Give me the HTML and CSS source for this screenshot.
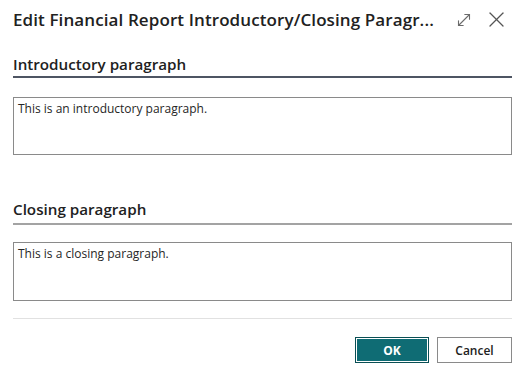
FILE: index.html
```html
<!DOCTYPE html>
<html lang="en">
<head>
<meta charset="utf-8">
<title>Edit Financial Report Introductory/Closing Paragraphs</title>
<link rel="stylesheet" href="styles.css">
</head>
<body>
<div class="dialog">
  <header class="dialog-header">
    <h1 class="dialog-title">Edit Financial Report Introductory/Closing Paragr...</h1>
    <div class="header-actions">
      <button class="icon-btn" aria-label="Expand">
        <svg width="14" height="14" viewBox="0 0 14 14" fill="none" stroke="#6b6b6b" stroke-width="1.1" stroke-linecap="round">
          <path d="M1.5 12.5 L12.5 1.5"/>
          <path d="M7.8 1.5 H12.5 V6.2"/>
          <path d="M1.5 7.8 V12.5 H6.2"/>
        </svg>
      </button>
      <button class="icon-btn" aria-label="Close">
        <svg width="15" height="15" viewBox="0 0 15 15" fill="none" stroke="#555" stroke-width="1.3" stroke-linecap="round">
          <path d="M1 1 L14 14"/>
          <path d="M14 1 L1 14"/>
        </svg>
      </button>
    </div>
  </header>

  <section class="group group-first">
    <h2 class="group-title">Introductory paragraph</h2>
    <div class="textbox">This is an introductory paragraph.</div>
  </section>

  <section class="group group-second">
    <h2 class="group-title">Closing paragraph</h2>
    <div class="textbox">This is a closing paragraph.</div>
  </section>

  <footer class="dialog-footer">
    <button class="btn btn-primary">OK</button>
    <button class="btn btn-secondary">Cancel</button>
  </footer>
</div>
</body>
</html>
```

FILE: styles.css
```css
* { box-sizing: border-box; }
html, body {
  margin: 0;
  padding: 0;
  background: #ffffff;
}
body {
  font-family: "Open Sans", "Noto Sans", sans-serif;
  color: #212121;
}
.dialog {
  width: 524px;
  height: 375px;
  padding: 0 12px 0 13px;
  display: flex;
  flex-direction: column;
}
.dialog-header {
  display: flex;
  align-items: center;
  justify-content: space-between;
  height: 38px;
  padding-top: 1px;
}
.dialog-title {
  margin: 0;
  font-size: 17px;
  font-weight: 600;
  color: #212121;
  white-space: nowrap;
  letter-spacing: 0.1px;
}
.header-actions {
  display: flex;
  align-items: center;
  gap: 18px;
  margin-right: 8px;
}
.icon-btn {
  background: none;
  border: none;
  padding: 0;
  display: flex;
  cursor: pointer;
}
.group {
  display: flex;
  flex-direction: column;
}
.group-title {
  margin: 16px 0 0 0;
  font-size: 15.2px;
  font-weight: 600;
  color: #212121;
  padding-bottom: 2px;
  border-bottom: 2px solid #4e5563;
  line-height: 20px;
}
.textbox {
  margin-top: 19px;
  height: 58px;
  border: 1px solid #8a8a8a;
  padding: 3px 4px;
  font-size: 12px;
  line-height: 16px;
  color: #262626;
}
.group-second .group-title {
  margin-top: 44px;
  padding-bottom: 4px;
  border-bottom-color: #a3a3a3;
}
.group-second .textbox {
  margin-top: 17px;
  height: 59px;
}
.dialog-footer {
  margin-top: 17px;
  border-top: 1px solid #e1e1e1;
  display: flex;
  justify-content: flex-end;
  gap: 8px;
  padding-top: 18px;
}
.btn {
  font-family: "Open Sans", "Noto Sans", sans-serif;
  height: 26px;
  font-size: 12px;
  font-weight: 700;
  cursor: pointer;
}
.btn-primary {
  width: 74px;
  background: #0f6c74;
  color: #ffffff;
  border: 1px solid #0a4f55;
  box-shadow: inset 0 0 0 1px #ffffff;
}
.btn-secondary {
  width: 75px;
  background: #ffffff;
  color: #212121;
  border: 1px solid #8a8a8a;
  font-weight: 600;
}
```
